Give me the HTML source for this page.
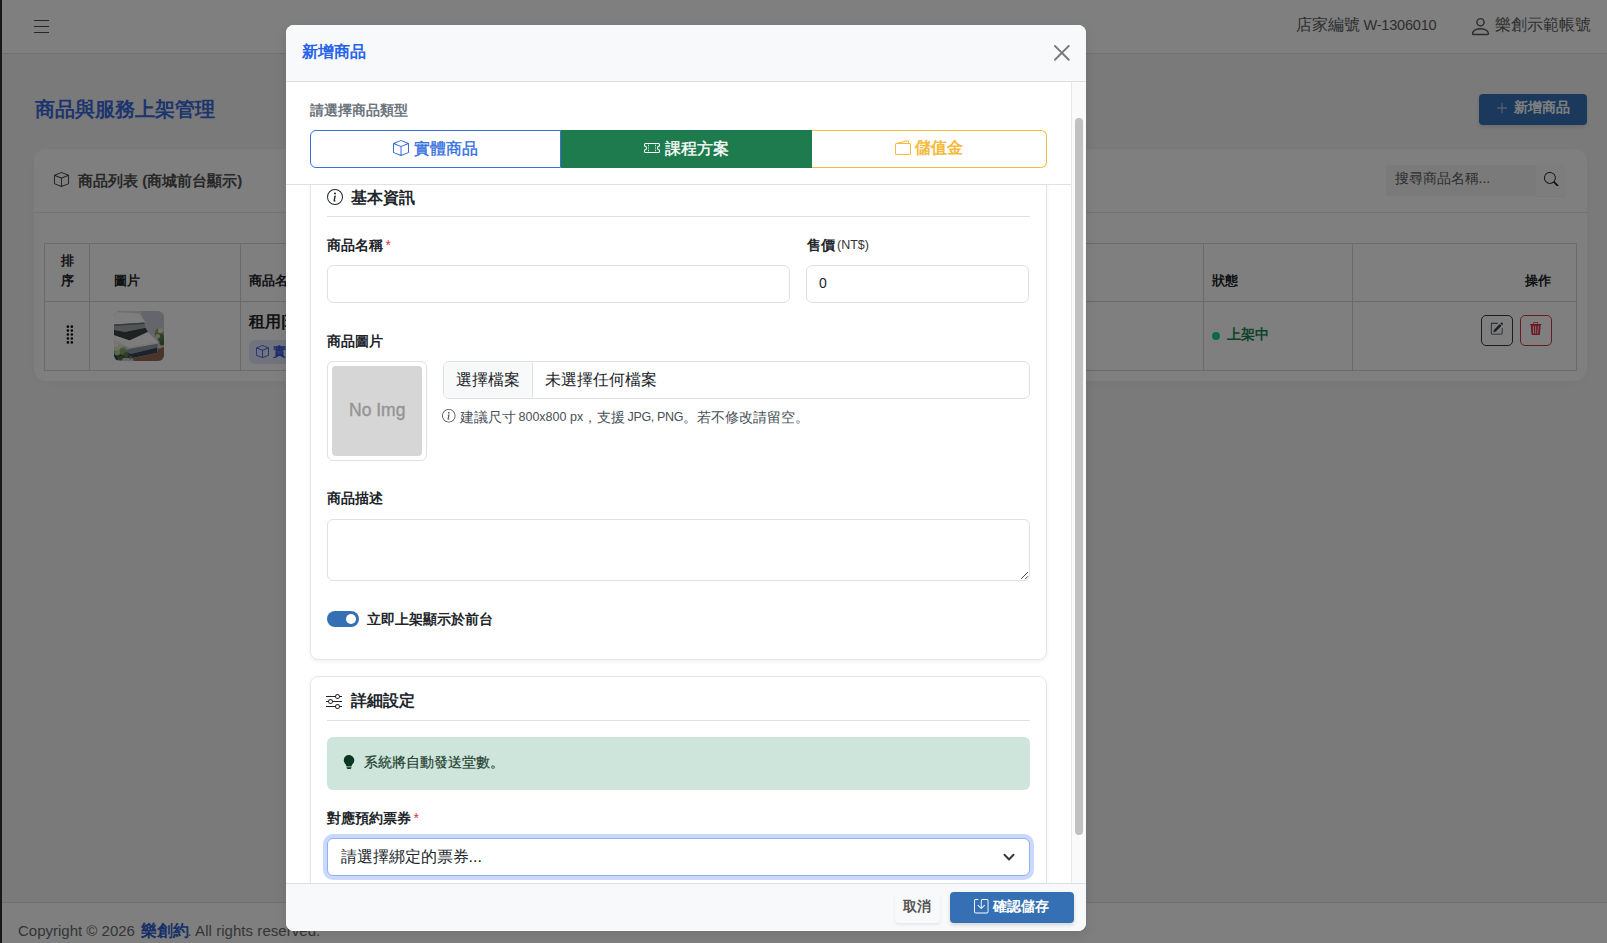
<!DOCTYPE html>
<html lang="zh-Hant">
<head>
<meta charset="utf-8">
<title>商品與服務上架管理</title>
<style>
*{box-sizing:border-box;margin:0;padding:0}
html,body{width:1607px;height:943px;overflow:hidden}
body{font-family:"Liberation Sans",sans-serif;font-size:16px;color:#212529;background:#f5f5f7;position:relative}
.abs{position:absolute}
.t{position:absolute;white-space:nowrap;line-height:1}
svg{display:block;position:absolute}
/* ---------- page ---------- */
#page{position:absolute;left:0;top:0;width:1607px;height:943px;overflow:hidden;background:#f5f5f7}
#sidebar{position:absolute;left:0;top:0;width:2px;height:943px;background:#2e3033}
#hdr{position:absolute;left:2px;top:0;width:1605px;height:54px;background:#fff;border-bottom:1px solid #dee2e6}
#ftr{position:absolute;left:2px;top:902px;width:1605px;height:41px;background:#fff;border-top:1px solid #dee2e6}
#card{position:absolute;left:34px;top:149px;width:1553px;height:232px;background:#fff;border-radius:12px;box-shadow:0 2px 10px rgba(0,0,0,.035)}
#cardhdr{position:absolute;left:0;top:0;width:1553px;height:64px;border-bottom:1px solid #e4e7ea}
.cell{position:absolute;border:1px solid #d4d7da}
.th{font-size:13px;font-weight:700;color:#212529}
/* ---------- overlay ---------- */
#ov{position:absolute;left:0;top:0;width:1607px;height:943px;background:rgba(0,0,0,.5)}
/* ---------- modal ---------- */
#modal{position:absolute;left:286px;top:25px;width:800px;height:906px;background:#fff;border-radius:8px;overflow:hidden;box-shadow:0 4px 12px rgba(0,0,0,.10)}
#m{position:absolute;left:-286px;top:-25px;width:1607px;height:943px}
#mhdr{position:absolute;left:286px;top:25px;width:800px;height:57px;background:#f8f9fa;border-bottom:1px solid #dfe0e2}
#mftr{position:absolute;left:286px;top:883px;width:800px;height:48px;background:#f8f9fa;border-top:1px solid #dfe0e2}
#sticky{position:absolute;left:286px;top:82px;width:785px;height:103px;background:#fff;border-bottom:1px solid #e0e1e3}
#track{position:absolute;left:1071px;top:82px;width:15px;height:801px;background:#fafafa;border-left:1px solid #e8e8e8}
#thumb{position:absolute;left:1075px;top:118px;width:8px;height:717px;background:#c1c1c1;border-radius:4px}
.mcard{position:absolute;left:310px;width:737px;background:#fff;border:1px solid #e5e6e8;border-radius:8px;box-shadow:0 2px 4px rgba(0,0,0,.05)}
.hr{position:absolute;left:327px;width:703px;height:1px;background:#e0e1e3}
.inp{position:absolute;background:#fff;border:1px solid #dfe1e4;border-radius:6px}
.lbl{font-size:14px;font-weight:700;color:#212529}
.req{color:#dc3545;font-weight:400}
.sm{font-size:14px;color:#495057}
.sml{font-size:12.5px;color:#495057}
</style>
</head>
<body>
<div id="page">
  <div id="sidebar"></div>
  <div id="hdr"></div>
  <!-- hamburger -->
  <div class="abs" style="left:34px;top:20.100px;width:15.200px;height:1.300px;background:#4a4d50"></div>
  <div class="abs" style="left:34px;top:25.850px;width:15.200px;height:1.300px;background:#4a4d50"></div>
  <div class="abs" style="left:34px;top:31.600px;width:15.200px;height:1.300px;background:#4a4d50"></div>
  <!-- header right -->
  <div class="t" style="left:1296px;top:17px;font-size:16px;color:#5a5d61">店家編號</div>
  <div class="t" style="left:1363.500px;top:18px;font-size:14.500px;color:#5a5d61;letter-spacing:-.2px">W-1306010</div>
  <svg style="left:1469px;top:15px" width="23" height="23" viewBox="0 0 16 16" fill="#55585c"><path d="M8 8a3 3 0 1 0 0-6 3 3 0 0 0 0 6m2-3a2 2 0 1 1-4 0 2 2 0 0 1 4 0m4 8c0 1-1 1-1 1H3s-1 0-1-1 1-4 6-4 6 3 6 4m-1-.004c-.001-.246-.154-.986-.832-1.664C11.516 10.68 10.289 10 8 10s-3.516.68-4.168 1.332c-.678.678-.83 1.418-.832 1.664z"/></svg>
  <div class="t" style="left:1495px;top:17px;font-size:16px;color:#5a5d61">樂創示範帳號</div>
  <!-- title + add button -->
  <div class="t" style="left:34.5px;top:99px;font-size:20px;font-weight:700;color:#3a6bd8">商品與服務上架管理</div>
  <div class="abs" style="left:1479px;top:94px;width:108px;height:31px;background:#3672b8;border-radius:4px;box-shadow:0 2px 4px rgba(0,0,0,.12)"></div>
  <svg style="left:1495px;top:100.700px" width="14" height="14" viewBox="0 0 16 16" fill="#d3dbe8"><path fill-rule="evenodd" d="M8 2a.5.5 0 0 1 .5.5v5h5a.5.5 0 0 1 0 1h-5v5a.5.5 0 0 1-1 0v-5h-5a.5.5 0 0 1 0-1h5v-5A.5.5 0 0 1 8 2"/></svg>
  <div class="t" style="left:1514px;top:100.250px;font-size:14px;font-weight:700;color:#fff">新增商品</div>
  <!-- card -->
  <div id="card"><div id="cardhdr"></div></div>
  <svg style="left:54px;top:172px" width="15" height="15" viewBox="0 0 16 16" fill="#444"><path d="M8.186 1.113a.5.5 0 0 0-.372 0L1.846 3.5 8 5.961 14.154 3.5zM15 4.239l-6.5 2.6v7.922l6.500-2.600V4.240zM7.500 14.762V6.838L1 4.239v7.923zM7.443.184a1.500 1.500 0 0 1 1.114 0l7.129 2.852A.5.5 0 0 1 16 3.500v8.662a1 1 0 0 1-.629.928l-7.185 2.874a.5.5 0 0 1-.372 0L.630 13.090a1 1 0 0 1-.630-.928V3.500a.5.5 0 0 1 .314-.464z"/></svg>
  <div class="t" style="left:78px;top:173px;font-size:15px;font-weight:700;color:#505050">商品列表 (商城前台顯示)</div>
  <!-- search -->
  <div class="abs" style="left:1386px;top:165px;width:150px;height:31px;background:#f5f5f7;border-radius:4px 0 0 4px"></div>
  <div class="t" style="left:1394.500px;top:171.200px;font-size:14px;color:#565a5f">搜尋商品名稱...</div>
  <div class="abs" style="left:1536px;top:165px;width:30px;height:31px;background:#fbfbfc;border-radius:0 4px 4px 0;box-shadow:0 1px 1px rgba(0,0,0,.06)"></div>
  <svg style="left:1544px;top:171.700px" width="14.500" height="14.500" viewBox="0 0 16 16" fill="#222"><path d="M11.742 10.344a6.500 6.500 0 1 0-1.397 1.398h-.001q.044.060.098.115l3.850 3.850a1 1 0 0 0 1.415-1.414l-3.850-3.850a1 1 0 0 0-.115-.100zM12 6.500a5.500 5.500 0 1 1-11 0 5.500 5.500 0 0 1 11 0"/></svg>
  <!-- table -->
  <div class="cell" style="left:44px;top:243px;width:46px;height:59px"></div>
  <div class="cell" style="left:89px;top:243px;width:152px;height:59px"></div>
  <div class="cell" style="left:240px;top:243px;width:964px;height:59px"></div>
  <div class="cell" style="left:1203px;top:243px;width:150px;height:59px"></div>
  <div class="cell" style="left:1352px;top:243px;width:225px;height:59px"></div>
  <div class="cell" style="left:44px;top:301px;width:46px;height:70px"></div>
  <div class="cell" style="left:89px;top:301px;width:152px;height:70px"></div>
  <div class="cell" style="left:240px;top:301px;width:964px;height:70px"></div>
  <div class="cell" style="left:1203px;top:301px;width:150px;height:70px"></div>
  <div class="cell" style="left:1352px;top:301px;width:225px;height:70px"></div>
  <div class="t th" style="left:61px;top:254px">排</div>
  <div class="t th" style="left:61px;top:274px">序</div>
  <div class="t th" style="left:114px;top:274px">圖片</div>
  <div class="t th" style="left:249px;top:274px">商品名稱</div>
  <div class="t th" style="left:1212px;top:274px">狀態</div>
  <div class="t th" style="left:1525px;top:274px">操作</div>
  <!-- row -->
  <svg style="left:60.400px;top:323.700px" width="21" height="21" viewBox="0 0 16 16" fill="#111"><path d="M7 2a1 1 0 1 1-2 0 1 1 0 0 1 2 0m3 0a1 1 0 1 1-2 0 1 1 0 0 1 2 0M7 5a1 1 0 1 1-2 0 1 1 0 0 1 2 0m3 0a1 1 0 1 1-2 0 1 1 0 0 1 2 0M7 8a1 1 0 1 1-2 0 1 1 0 0 1 2 0m3 0a1 1 0 1 1-2 0 1 1 0 0 1 2 0m-3 3a1 1 0 1 1-2 0 1 1 0 0 1 2 0m3 0a1 1 0 1 1-2 0 1 1 0 0 1 2 0m-3 3a1 1 0 1 1-2 0 1 1 0 0 1 2 0m3 0a1 1 0 1 1-2 0 1 1 0 0 1 2 0"/></svg>
  <svg id="pic" style="left:114px;top:311px;border-radius:6px" width="50" height="50" viewBox="0 0 50 50"><rect width="50" height="50" fill="#cbccd6"/><rect width="28" height="8" fill="#dcdde2"/><polygon points="0.0,1.0 25.6,2.6 31.5,11.4 30.2,11.8 0.0,13.6" fill="#fdfdfd"/><polygon points="0.0,13.5 30.3,11.6 31.4,16.6 11.0,20.9 0.0,19.0" fill="#a4aaad"/><polygon points="0.0,13.5 30.3,11.6 30.6,13.0 0.0,15.1" fill="#6f7679"/><polygon points="0.0,19.0 11.0,20.9 31.5,16.8 33.8,20.8 15.6,29.4 0.0,24.2" fill="#3c4446"/><polygon points="0.0,24.2 15.6,29.4 34.1,21.3 43.5,30.2 43.5,32.8 15.6,37.8 0.0,31.2" fill="#fbfbfa"/><polygon points="0.0,28.6 15.6,35.8 43.5,31.2 43.5,32.8 15.6,37.8 0.0,31.2" fill="#e9eae8"/><polygon points="15.6,37.8 43.5,32.8 43.5,36.4 16.9,43.0 10.7,40.3" fill="#8e9ca6"/><polygon points="0.0,40.3 10.7,40.3 16.9,43.0 43.5,36.4 42.9,41.9 18.8,47.1 0.0,47.1" fill="#3a4252"/><polygon points="19.8,50.0 50.0,50.0 50.0,36.0 43.8,38.0 42.9,41.9 18.8,47.1" fill="#946a56"/><circle cx="45.1" cy="22.1" r="4.5" fill="#7e9a5c"/><circle cx="47.7" cy="27.3" r="3.9" fill="#5d7a44"/><circle cx="46.4" cy="19.5" r="2.6" fill="#dfe8cc"/><circle cx="43.8" cy="25.3" r="2.3" fill="#c9d8ae"/><circle cx="48.1" cy="31.8" r="2.6" fill="#4f6a3a"/><circle cx="42.5" cy="20.8" r="1.6" fill="#8faa6a"/><circle cx="4.2" cy="36.4" r="3.9" fill="#dbe6c8"/><circle cx="8.8" cy="40.3" r="3.6" fill="#8aa868"/><circle cx="3.2" cy="41.6" r="2.9" fill="#b9cf9a"/><circle cx="12.0" cy="44.2" r="2.6" fill="#5e7c46"/><circle cx="6.2" cy="46.8" r="2.6" fill="#4c6a3a"/><circle cx="2.3" cy="33.8" r="2.3" fill="#eef2e4"/><circle cx="10.7" cy="37.0" r="1.6" fill="#a7c086"/><circle cx="16.6" cy="46.8" r="1.6" fill="#7d9a5c"/><circle cx="2.3" cy="48.1" r="1.9" fill="#39503a"/></svg>
  <div class="t" style="left:249px;top:313.500px;font-size:16px;font-weight:700;color:#212529">租用|瑜珈墊</div>
  <div class="abs" style="left:249px;top:339.500px;width:90px;height:24.500px;background:#e2e8ff;border-radius:6px"></div>
  <svg style="left:256px;top:344.500px" width="13" height="13" viewBox="0 0 16 16" fill="#3b5bdb"><path d="M8.186 1.113a.5.5 0 0 0-.372 0L1.846 3.5 8 5.961 14.154 3.5zM15 4.239l-6.5 2.6v7.922l6.500-2.600V4.240zM7.500 14.762V6.838L1 4.239v7.923zM7.443.184a1.500 1.500 0 0 1 1.114 0l7.129 2.852A.5.5 0 0 1 16 3.500v8.662a1 1 0 0 1-.629.928l-7.185 2.874a.5.5 0 0 1-.372 0L.630 13.090a1 1 0 0 1-.630-.928V3.500a.5.5 0 0 1 .314-.464z"/></svg>
  <div class="t" style="left:273px;top:345px;font-size:13px;font-weight:700;color:#3b5bdb">實體商品</div>
  <div class="abs" style="left:1212px;top:331.500px;width:8px;height:8px;border-radius:50%;background:#21cf98"></div>
  <div class="t" style="left:1226.500px;top:326.500px;font-size:14px;font-weight:700;color:#198754">上架中</div>
  <div class="abs" style="left:1481px;top:315px;width:32px;height:31px;border:1px solid #343a40;border-radius:5px"></div>
  <svg style="left:1489.700px;top:322.300px" width="13.400" height="13.400" viewBox="0 0 16 16" fill="#343a40"><path d="M15.502 1.940a.5.5 0 0 1 0 .706L14.459 3.690l-2-2L13.502.646a.5.5 0 0 1 .707 0l1.293 1.293zm-1.750 2.456-2-2L4.939 9.210a.5.5 0 0 0-.121.196l-.805 2.414a.25.25 0 0 0 .316.316l2.414-.805a.5.5 0 0 0 .196-.120l6.813-6.814z"/><path fill-rule="evenodd" d="M1 13.500A1.500 1.500 0 0 0 2.500 15h11a1.500 1.500 0 0 0 1.500-1.500v-6a.5.5 0 0 0-1 0v6a.5.5 0 0 1-.5.5h-11a.5.5 0 0 1-.5-.5v-11a.5.5 0 0 1 .5-.5H9a.5.5 0 0 0 0-1H2.500A1.500 1.500 0 0 0 1 2.500z"/></svg>
  <div class="abs" style="left:1520px;top:315px;width:32px;height:31px;border:1px solid #dc3545;border-radius:5px"></div>
  <svg style="left:1529.200px;top:321.900px" width="13.400" height="13.400" viewBox="0 0 16 16" fill="#dc3545"><path d="M11 1.500v1h3.500a.5.5 0 0 1 0 1h-.538l-.853 10.660A2 2 0 0 1 11.115 16h-6.230a2 2 0 0 1-1.994-1.840L2.038 3.500H1.500a.5.5 0 0 1 0-1H5v-1A1.500 1.500 0 0 1 6.500 0h3A1.500 1.500 0 0 1 11 1.500m-5 0v1h4v-1a.5.5 0 0 0-.5-.5h-3a.5.5 0 0 0-.5.5M4.500 5.029l.5 8.500a.5.5 0 1 0 .998-.060l-.5-8.500a.5.5 0 1 0-.998.060m6.530-.528a.5.5 0 0 0-.528.470l-.5 8.500a.5.5 0 0 0 .998.058l.5-8.500a.5.5 0 0 0-.470-.528M8 4.500a.5.5 0 0 0-.5.500v8.500a.5.5 0 0 0 1 0V5a.5.5 0 0 0-.5-.5"/></svg>
  <!-- footer -->
  <div id="ftr"></div>
  <div class="t" style="left:18px;top:923px;font-size:15px;color:#666b70">Copyright © 2026</div>
  <div class="t" style="left:140.500px;top:923px;font-size:16px;font-weight:700;color:#2f5fd0">樂創約</div>
  <div class="t" style="left:187.500px;top:923px;font-size:15px;color:#666b70;letter-spacing:.05px">. All rights reserved.</div>
</div>
<div id="ov"></div>
<div id="modal"><div id="m">
  <div id="mbody">
    <!-- card 1 -->
    <div class="mcard" style="top:172px;height:488px"></div>
    <svg style="left:326.500px;top:188.500px" width="16" height="16" viewBox="0 0 16 16" fill="#212529"><path d="M8 15A7 7 0 1 1 8 1a7 7 0 0 1 0 14m0 1A8 8 0 1 0 8 0a8 8 0 0 0 0 16"/><path d="m8.93 6.588-2.29.287-.082.38.45.083c.294.07.352.176.288.469l-.738 3.468c-.194.897.105 1.319.808 1.319.545 0 1.178-.252 1.465-.598l.088-.416c-.2.176-.492.246-.686.246-.275 0-.375-.193-.304-.533zM9 4.5a1 1 0 1 1-2 0 1 1 0 0 1 2 0"/></svg>
    <div class="t" style="left:351px;top:189.750px;font-size:16px;font-weight:700">基本資訊</div>
    <div class="hr" style="top:216px"></div>
    <div class="t lbl" style="left:327px;top:237.75px">商品名稱</div>
    <div class="t req" style="left:385.500px;top:238px;font-size:14px">*</div>
    <div class="inp" style="left:327px;top:265px;width:463px;height:38px"></div>
    <div class="t lbl" style="left:806.500px;top:237.75px">售價</div>
    <div class="t" style="left:837px;top:239px;font-size:12.500px;color:#333">(NT$)</div>
    <div class="inp" style="left:806px;top:265px;width:223px;height:38px"></div>
    <div class="t" style="left:819px;top:276px;font-size:14px;color:#212529">0</div>
    <div class="t lbl" style="left:327px;top:333.75px">商品圖片</div>
    <div class="inp" style="left:327px;top:361px;width:100px;height:100px"></div>
    <div class="abs" style="left:332px;top:366px;width:90px;height:90px;background:#d6d6d6;border-radius:4px"></div>
    <div class="t" style="left:349px;top:401.500px;font-size:17.500px;color:#949494;-webkit-text-stroke:.35px #949494">No Img</div>
    <div class="inp" style="left:443px;top:361px;width:587px;height:38px;overflow:hidden"><div class="abs" style="left:0;top:0;width:89px;height:36px;background:#f8f9fa;border-right:1px solid #dee2e6"></div></div>
    <div class="t" style="left:456px;top:372px;font-size:16px">選擇檔案</div>
    <div class="t" style="left:545px;top:372px;font-size:16px">未選擇任何檔案</div>
    <svg style="left:442.400px;top:409.400px" width="13.600" height="13.600" viewBox="0 0 16 16" fill="#495057"><path d="M8 15A7 7 0 1 1 8 1a7 7 0 0 1 0 14m0 1A8 8 0 1 0 8 0a8 8 0 0 0 0 16"/><path d="m8.93 6.588-2.29.287-.082.38.45.083c.294.07.352.176.288.469l-.738 3.468c-.194.897.105 1.319.808 1.319.545 0 1.178-.252 1.465-.598l.088-.416c-.2.176-.492.246-.686.246-.275 0-.375-.193-.304-.533zM9 4.5a1 1 0 1 1-2 0 1 1 0 0 1 2 0"/></svg>
    <div class="t sm" style="left:459.500px;top:410px">建議尺寸</div>
    <div class="t sml" style="left:518.500px;top:411px">800x800 px</div>
    <div class="t sm" style="left:583px;top:410px">，支援</div>
    <div class="t sml" style="left:627.500px;top:411px;letter-spacing:-.35px">JPG, PNG</div>
    <div class="t sm" style="left:683px;top:410px">。若不修改請留空。</div>
    <div class="t lbl" style="left:327px;top:491.25px">商品描述</div>
    <div class="inp" style="left:327px;top:519px;width:703px;height:62px"></div>
    <svg style="left:1020px;top:571px" width="9" height="9" viewBox="0 0 9 9"><path d="M1.100 7.900 7.900 1.100M5.300 7.900 7.900 5.300" stroke="#4a4a4a" stroke-width="1" fill="none"/></svg>
    <div class="abs" style="left:327px;top:611px;width:32px;height:16px;border-radius:8px;background:#3470b3"></div>
    <div class="abs" style="left:345.800px;top:613.700px;width:10.600px;height:10.600px;border-radius:50%;background:#fff"></div>
    <div class="t lbl" style="left:367px;top:611.75px">立即上架顯示於前台</div>
    <!-- card 2 -->
    <div class="mcard" style="top:676px;height:300px"></div>
    <svg style="left:326px;top:693px" width="16" height="16" viewBox="0 0 16 16" fill="#212529"><path fill-rule="evenodd" d="M11.5 2a1.5 1.5 0 1 0 0 3 1.5 1.5 0 0 0 0-3M9.05 3a2.5 2.5 0 0 1 4.9 0H16v1h-2.050a2.5 2.5 0 0 1-4.9 0H0V3zM4.5 7a1.5 1.5 0 1 0 0 3 1.5 1.5 0 0 0 0-3M2.05 8a2.5 2.5 0 0 1 4.9 0H16v1H6.950a2.5 2.5 0 0 1-4.9 0H0V8zm9.450 4a1.5 1.5 0 1 0 0 3 1.5 1.5 0 0 0 0-3m-2.450 1a2.5 2.5 0 0 1 4.9 0H16v1h-2.050a2.5 2.5 0 0 1-4.9 0H0v-1z"/></svg>
    <div class="t" style="left:351px;top:693.250px;font-size:16px;font-weight:700">詳細設定</div>
    <div class="hr" style="top:720px"></div>
    <div class="abs" style="left:327px;top:737px;width:703px;height:53px;background:#cde5da;border-radius:6px"></div>
    <svg style="left:342px;top:755.300px" width="14" height="14" viewBox="0 0 16 16" fill="#0a3622"><path d="M2 6a6 6 0 1 1 10.174 4.31c-.203.196-.359.4-.453.619l-.762 1.769A.5.5 0 0 1 10.5 13h-5a.5.5 0 0 1-.46-.302l-.761-1.770a2 2 0 0 0-.453-.618A5.980 5.980 0 0 1 2 6m3 8.500a.5.500 0 0 1 .5-.5h5a.5.500 0 0 1 0 1l-.224.447a1 1 0 0 1-.894.553H6.618a1 1 0 0 1-.894-.553L5.500 15a.5.500 0 0 1-.5-.5"/></svg>
    <div class="t" style="left:364px;top:755.250px;font-size:14px;color:#1f3d2f;-webkit-text-stroke:.2px #1f3d2f">系統將自動發送堂數。</div>
    <div class="t lbl" style="left:327px;top:810.75px">對應預約票券</div>
    <div class="t req" style="left:413.500px;top:811px;font-size:14px">*</div>
    <div class="inp" style="left:327px;top:838px;width:703px;height:38px;border-color:#8fb0f3;box-shadow:0 0 0 4px rgba(45,105,240,.25)"></div>
    <div class="t" style="left:340.500px;top:848.500px;font-size:16px">請選擇綁定的票券...</div>
    <svg style="left:1001px;top:850px" width="16" height="14" viewBox="0 0 16 14"><path d="M3.500 4.750 8 9.500l4.500-4.750" fill="none" stroke="#343a40" stroke-width="2" stroke-linecap="round" stroke-linejoin="round"/></svg>
  </div>
  <div id="sticky"></div>
  <div class="t" style="left:310px;top:102.500px;font-size:14px;font-weight:700;color:#6c757d">請選擇商品類型</div>
  <div class="abs" style="left:310px;top:130px;width:251px;height:38px;background:#fff;border:1px solid #3b6fd9;border-radius:6px 0 0 6px"></div>
  <svg style="left:393px;top:140px" width="16" height="16" viewBox="0 0 16 16" fill="#2f6de0"><path d="M8.186 1.113a.5.5 0 0 0-.372 0L1.846 3.5 8 5.961 14.154 3.5zM15 4.239l-6.5 2.6v7.922l6.5-2.6V4.240zM7.5 14.762V6.838L1 4.239v7.923zM7.443.184a1.5 1.5 0 0 1 1.114 0l7.129 2.852A.5.5 0 0 1 16 3.5v8.662a1 1 0 0 1-.629.928l-7.185 2.874a.5.5 0 0 1-.372 0L.63 13.090a1 1 0 0 1-.63-.928V3.5a.5.5 0 0 1 .314-.464z"/></svg>
  <div class="t" style="left:414px;top:140.500px;font-size:16px;color:#2f6de0;-webkit-text-stroke:.35px #2f6de0">實體商品</div>
  <div class="abs" style="left:560.500px;top:130px;width:251.500px;height:38px;background:#1e7b4e"></div>
  <svg style="left:644px;top:140px" width="16" height="16" viewBox="0 0 16 16" fill="#fff"><path d="M4 4.850v.9h1v-.9zm7 0v.9h1v-.9zm-7 1.800v.9h1v-.9zm7 0v.9h1v-.9zm-7 1.800v.9h1v-.9zm7 0v.9h1v-.9zm-7 1.800v.9h1v-.9zm7 0v.9h1v-.9z"/><path d="M1.500 3A1.500 1.500 0 0 0 0 4.500V6a.5.500 0 0 0 .5.500 1.500 1.500 0 1 1 0 3 .5.500 0 0 0-.5.500v1.500A1.500 1.500 0 0 0 1.500 13h13a1.500 1.500 0 0 0 1.500-1.500V10a.5.500 0 0 0-.5-.5 1.500 1.500 0 0 1 0-3A.5.500 0 0 0 16 6V4.500A1.500 1.500 0 0 0 14.500 3zM1 4.500a.5.500 0 0 1 .5-.5h13a.5.500 0 0 1 .5.500v1.050a2.500 2.500 0 0 0 0 4.900v1.050a.5.500 0 0 1-.5.500h-13a.5.500 0 0 1-.5-.5v-1.050a2.500 2.500 0 0 0 0-4.900z"/></svg>
  <div class="t" style="left:664.500px;top:140.500px;font-size:16px;color:#fff;-webkit-text-stroke:.35px #fff">課程方案</div>
  <div class="abs" style="left:812px;top:130px;width:235px;height:38px;background:#fff;border:1px solid #f2bc42;border-left:0;border-radius:0 6px 6px 0"></div>
  <svg style="left:895px;top:139.500px" width="16" height="16" viewBox="0 0 16 16" fill="#f6ba3c"><path d="M12.136.326A1.500 1.500 0 0 1 14 1.780V3h.5A1.500 1.500 0 0 1 16 4.500v9a1.500 1.500 0 0 1-1.500 1.500h-13A1.500 1.500 0 0 1 0 13.500v-9a1.500 1.500 0 0 1 1.432-1.499zM5.562 3H13V1.780a.5.500 0 0 0-.621-.484zM1.500 4a.5.500 0 0 0-.5.500v9a.5.500 0 0 0 .5.500h13a.5.500 0 0 0 .5-.5v-9a.5.500 0 0 0-.5-.5z"/></svg>
  <div class="t" style="left:915.200px;top:140.250px;font-size:16px;font-weight:700;color:#f6ba3c">儲值金</div>
  <div id="track"></div><div id="thumb"></div>
  <div id="mhdr"></div>
  <div class="t" style="left:302px;top:44px;font-size:16px;font-weight:700;color:#2563eb">新增商品</div>
  <svg style="left:1054.300px;top:45px;opacity:.5" width="15.700" height="15.700" viewBox="0 0 16 16" fill="#000"><path d="M.293.293a1 1 0 0 1 1.414 0L8 6.586 14.293.293a1 1 0 1 1 1.414 1.414L9.414 8l6.293 6.293a1 1 0 0 1-1.414 1.414L8 9.414l-6.293 6.293a1 1 0 0 1-1.414-1.414L6.586 8 .293 1.707a1 1 0 0 1 0-1.414z"/></svg>
  <div id="mftr"></div>
  <div class="abs" style="left:895px;top:892px;width:45px;height:30.500px;background:#f8f9fa;border-radius:4px;box-shadow:0 2px 3px rgba(0,0,0,.07)"></div>
  <div class="t" style="left:903px;top:898.750px;font-size:14px;font-weight:700;color:#555">取消</div>
  <div class="abs" style="left:950px;top:892px;width:124px;height:30.500px;background:#3470b3;border-radius:4px;box-shadow:0 2px 4px rgba(0,0,0,.15)"></div>
  <svg style="left:974px;top:899px" width="14.500" height="14.500" viewBox="0 0 16 16" fill="#fff"><path d="M2 1a1 1 0 0 0-1 1v12a1 1 0 0 0 1 1h12a1 1 0 0 0 1-1V2a1 1 0 0 0-1-1H9.500a1 1 0 0 0-1 1v7.293l2.646-2.647a.5.500 0 0 1 .708.708l-3.500 3.500a.5.500 0 0 1-.708 0l-3.500-3.500a.5.500 0 1 1 .708-.708L7.500 9.293V2a2 2 0 0 1 2-2H14a2 2 0 0 1 2 2v12a2 2 0 0 1-2 2H2a2 2 0 0 1-2-2V2a2 2 0 0 1 2-2h2.500a.5.500 0 0 1 0 1z"/></svg>
  <div class="t" style="left:993px;top:899px;font-size:14px;font-weight:700;color:#fff">確認儲存</div>
</div></div>
</body>
</html>
